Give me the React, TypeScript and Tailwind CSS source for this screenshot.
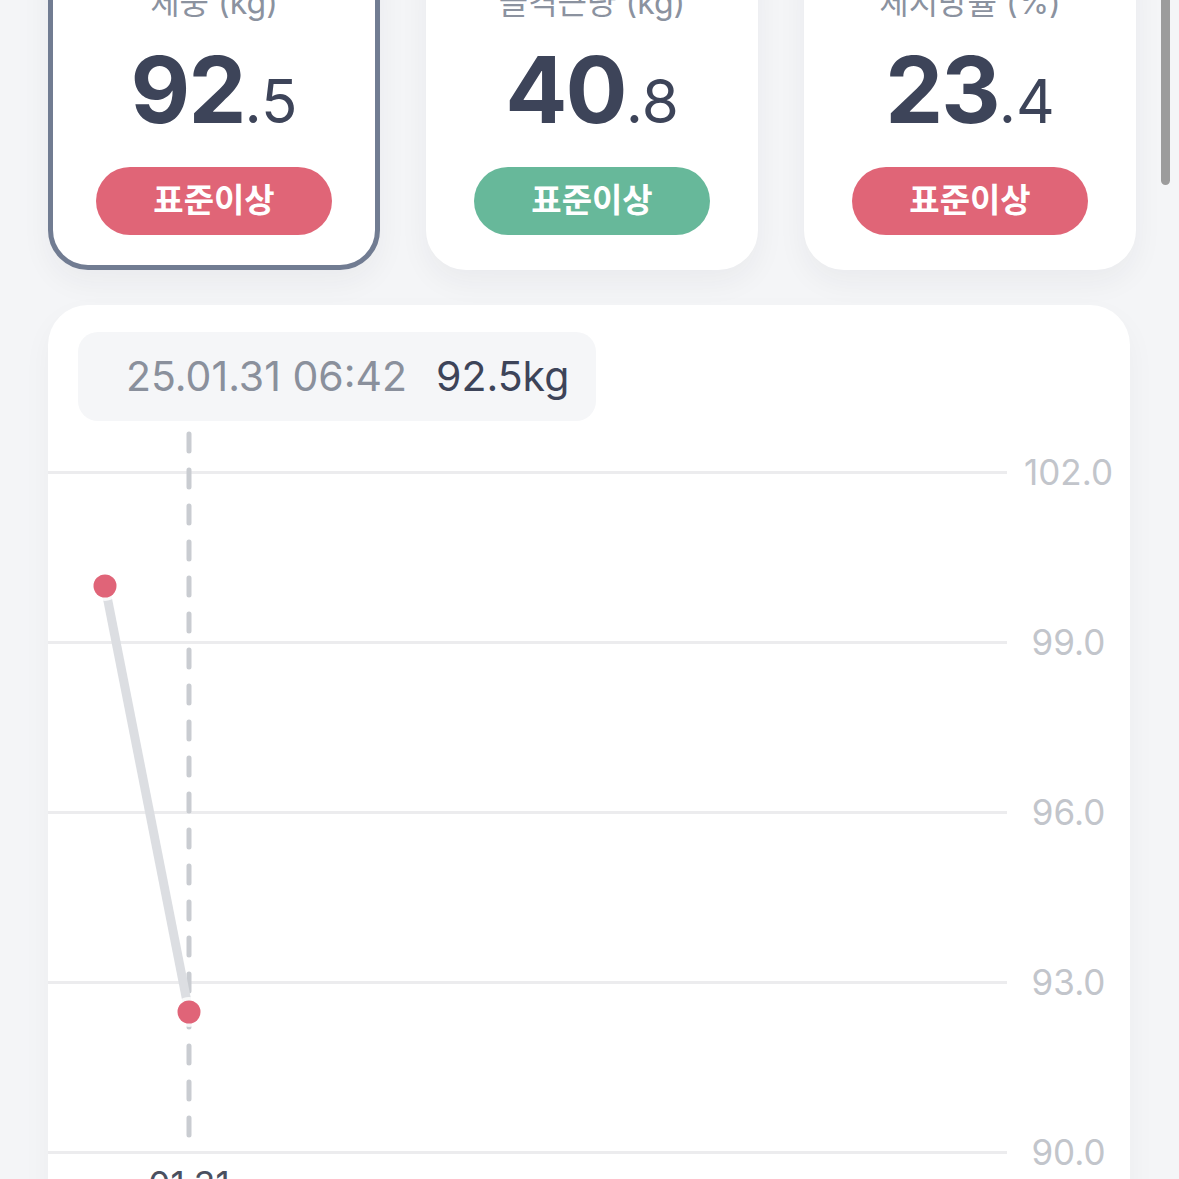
import { Fragment } from "react";

type Metric = {
  label: string;
  whole: string;
  frac: string;
  tone: "red" | "green";
  active?: boolean;
};

const metrics: Metric[] = [
  { label: "체중 (kg)", whole: "92", frac: ".5", tone: "red", active: true },
  { label: "골격근량 (kg)", whole: "40", frac: ".8", tone: "green" },
  { label: "체지방률 (%)", whole: "23", frac: ".4", tone: "red" },
];

const ticks = ["102.0", "99.0", "96.0", "93.0", "90.0"];

const font = { fontFamily: '"Inter", "Noto Sans CJK KR", sans-serif' };

function MetricCard({ m }: { m: Metric }) {
  return (
    <div
      className={`flex flex-col items-center rounded-[40px] border-[5px] bg-white pt-[38px] pb-[30px] shadow-[0_12px_30px_rgba(30,40,60,0.05)] ${
        m.active ? "border-[#717c92]" : "border-white"
      }`}
    >
      <div className="text-[32px] leading-[40px] text-[#8b929f]">{m.label}</div>
      <div className="mt-[17px] flex items-baseline leading-[100px] text-[#3d4459]">
        <span className="text-[92px] font-bold tracking-[-0.02em]">{m.whole}</span>
        <span className="text-[60px] font-normal">{m.frac}</span>
      </div>
      <div
        className={`mt-[16px] flex h-[68px] w-[236px] items-center justify-center rounded-full text-[33px] font-bold text-white ${
          m.tone === "red" ? "bg-[#e06577]" : "bg-[#67b89a]"
        }`}
      >
        표준이상
      </div>
    </div>
  );
}

function ChartOverlay() {
  // plot coords are relative to the plot box (left = card edge, top = tooltip bottom)
  const p1 = { x: 57, y: 165 };
  const p2 = { x: 141, y: 591 };
  return (
    <svg className="pointer-events-none absolute inset-0 h-full w-full" aria-hidden>
      <line x1={141} y1={13} x2={141} y2={714} stroke="#c9ccd1" strokeWidth={5} strokeLinecap="round" strokeDasharray="17 19" />
      <line x1={p1.x} y1={p1.y} x2={p2.x} y2={p2.y} stroke="#dcdee2" strokeWidth={9} />
      <circle cx={p1.x} cy={p1.y} r={15} fill="#ffffff" opacity={0.8} />
      <circle cx={p1.x} cy={p1.y} r={11.5} fill="#e06478" />
      <circle cx={p2.x} cy={p2.y} r={15} fill="#ffffff" opacity={0.8} />
      <circle cx={p2.x} cy={p2.y} r={11.5} fill="#e06478" />
    </svg>
  );
}

export default function App() {
  return (
    <div className="relative h-[1179px] w-[1179px] overflow-hidden bg-[#f4f5f7]" style={font}>
      <div className="-mt-[60px] pl-[48px]">
        <div className="grid w-[1088px] grid-cols-3 gap-[46px]">
          {metrics.map((m) => (
            <MetricCard key={m.label} m={m} />
          ))}
        </div>

        <div className="mt-[35px] w-[1082px] rounded-[40px] bg-white pt-[27px] shadow-[0_12px_30px_rgba(30,40,60,0.04)]">
          <div className="ml-[30px] flex h-[89px] w-[518px] items-center gap-[29px] rounded-[20px] bg-[#f5f6f8] pl-[48px] text-[41px]">
            <span className="text-[#8a909c]">25.01.31 06:42</span>
            <span className="text-[#3d4459]">92.5kg</span>
          </div>

          <div className="relative pt-[31px] pb-[40px]">
            <div className="flex flex-col gap-[130px]">
              {ticks.map((t) => (
                <Fragment key={t}>
                  <div className="flex h-[40px] items-center">
                    <div className="h-[3px] flex-1 bg-[#ececee]" />
                    <div className="w-[123px] text-center text-[35px] text-[#c2c5cb]">{t}</div>
                  </div>
                </Fragment>
              ))}
            </div>
            <div className="ml-[96px] -mt-[14px] w-[90px] text-center text-[35px] text-[#4a5060]">01.31</div>
            <ChartOverlay />
          </div>
        </div>
      </div>

      <div className="absolute right-[9px] top-0 h-[185px] w-[9px] rounded-b-full bg-[#9c9c9c]" />
    </div>
  );
}
